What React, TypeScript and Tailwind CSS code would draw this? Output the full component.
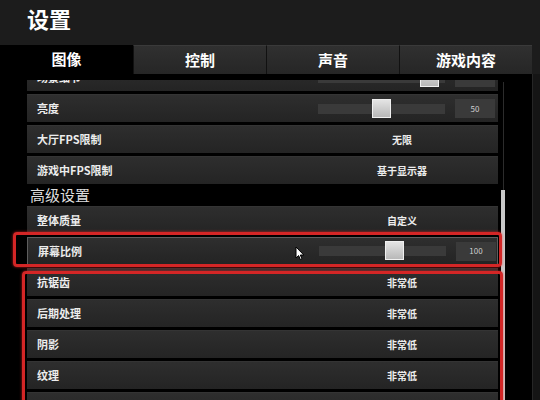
import React from "react";

const FONT = { fontFamily: '"Noto Sans CJK SC", "Noto Sans", sans-serif' };

function Slider({ pct, value }: { pct: number; value: string }) {
  return (
    <div className="flex items-center h-full pl-[12px]">
      <div className="relative w-[127px] h-[10px] bg-[#3a3a3a]">
        <div
          className="absolute top-[-5px] w-[19px] h-[19px] bg-linear-to-b from-[#e4e4e4] to-[#b8b8b8] border border-[#f0f0f0]"
          style={{ left: `${pct * 108}px` }}
        />
      </div>
      <div className="ml-[10px] w-[40px] h-[19px] bg-[#3a3a3a] flex items-center justify-center text-[8px] text-[#cfcfcf]">
        {value}
      </div>
    </div>
  );
}

function Row({
  label,
  value,
  slider,
  bordered,
  className = "",
}: {
  label: string;
  value?: string;
  slider?: { pct: number; value: string };
  bordered?: boolean;
  className?: string;
}) {
  return (
    <div
      className={`flex h-[28px] shrink-0 bg-linear-to-b from-[#2e2e2e] to-[#242424] ${
        bordered ? "border border-[#5e5e5e]" : "border-t border-[#343434]"
      } ${className}`}
    >
      <div className="w-[279px] pl-[10px] flex items-center text-[11px] font-bold text-[#ececec]">
        {label}
      </div>
      <div className="flex-1 h-full">
        {slider ? (
          <Slider pct={slider.pct} value={slider.value} />
        ) : (
          <div className="h-full flex items-center justify-center text-[10px] font-bold text-[#ececec]">
            {value}
          </div>
        )}
      </div>
    </div>
  );
}

export default function App() {
  const tabs = ["图像", "控制", "声音", "游戏内容"];
  return (
    <div className="relative w-[540px] h-[400px] bg-black overflow-hidden flex flex-col" style={FONT}>
      <div className="h-[45px] shrink-0 bg-[#1c1c1c] pl-[27px] pt-[3px] text-[22px] font-bold text-white leading-[30px]">
        设置
      </div>
      <div className="h-[29px] shrink-0 flex bg-[#1c1c1c]">
        {tabs.map((t, i) => (
          <div
            key={t}
            className={`w-[133px] flex items-center justify-center text-[15px] font-bold text-white ${
              i === 0
                ? "bg-black"
                : "bg-linear-to-b from-[#303030] to-[#262626] border-l border-[#111] border-t border-t-[#3a3a3a]"
            }`}
          >
            {t}
          </div>
        ))}
        <div className="flex-1 bg-[#1c1c1c]" />
      </div>
      <div className="flex-1 flex min-h-0">
        <div className="w-[27px] shrink-0" />
        <div className="w-[471px] shrink-0 pt-[6px] flex flex-col min-h-0">
          <div className="flex-1 overflow-hidden flex flex-col gap-[3px]">
            <Row label="场景细节" slider={{ pct: 0.94, value: "" }} className="mt-[-17px]" />
            <Row label="亮度" slider={{ pct: 0.5, value: "50" }} />
            <Row label="大厅FPS限制" value="无限" />
            <Row label="游戏中FPS限制" value="基于显示器" />
            <div className="h-[16px] shrink-0 pl-[3px] text-[15px] leading-[16px] text-[#dedede]">
              高级设置
            </div>
            <Row label="整体质量" value="自定义" />
            <Row label="屏幕比例" slider={{ pct: 0.61, value: "100" }} bordered />
            <Row label="抗锯齿" value="非常低" />
            <Row label="后期处理" value="非常低" />
            <Row label="阴影" value="非常低" />
            <Row label="纹理" value="非常低" />
            <Row label="特效" value="非常低" />
          </div>
        </div>
        <div className="w-[3px] shrink-0" />
        <div className="w-[4px] shrink-0 flex flex-col items-center pt-[8px]">
          <div className="h-[108px] w-px bg-[#2c2c2c]" />
          <div className="flex-1 w-[4px] bg-[#c9c9c9]" />
        </div>
        <div className="flex-1" />
        <div className="w-[8px] shrink-0 bg-[#151515] border-l border-[#262626]" />
      </div>

      {/* annotation boxes */}
      <div className="absolute left-[13px] top-[232px] w-[489px] h-[35px] border-[3px] border-[#d42626] rounded-[4px] shadow-[0_0_3px_rgba(255,40,40,0.7)]" />
      <div className="absolute left-[22px] top-[271px] w-[481px] h-[200px] border-[3px] border-[#d42626] rounded-[4px] shadow-[0_0_3px_rgba(255,40,40,0.7)]" />

      {/* mouse cursor */}
      <svg className="absolute left-[295px] top-[246px]" width="10" height="15" viewBox="0 0 10 15">
        <path d="M1 1 L1 12 L3.6 9.6 L5.4 13.6 L7 12.9 L5.3 9 L8.8 9 Z" fill="#ffffff" stroke="#000" strokeWidth="1" />
      </svg>
    </div>
  );
}
